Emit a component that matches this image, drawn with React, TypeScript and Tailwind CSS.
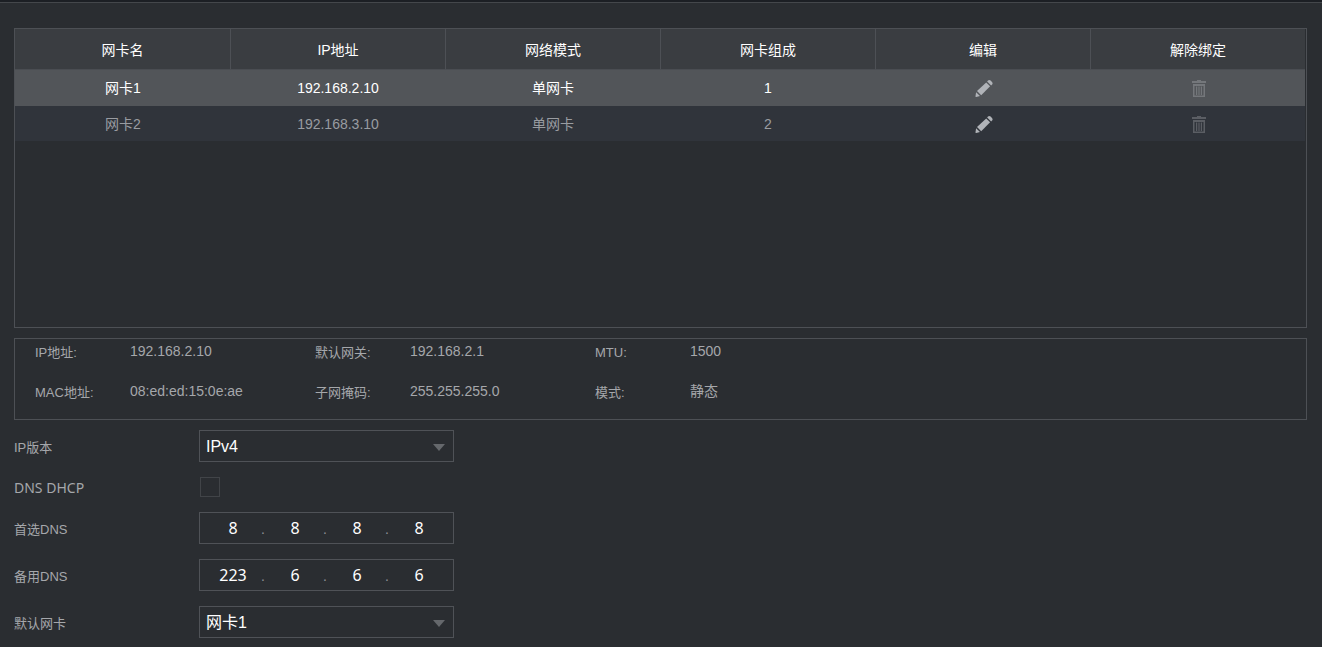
/**
 * TCP/IP network settings page
 *
 * - Network card table
 * - Details of the selected card
 * - DNS and default card form
 */

import { useState } from 'react';
import type { ReactNode } from 'react';
import clsx from 'clsx';

interface NetworkCard {
  name: string;
  ip: string;
  mode: string;
  members: string;
}

const COLUMNS = ['网卡名', 'IP地址', '网络模式', '网卡组成', '编辑', '解除绑定'];

const CARDS: NetworkCard[] = [
  { name: '网卡1', ip: '192.168.2.10', mode: '单网卡', members: '1' },
  { name: '网卡2', ip: '192.168.3.10', mode: '单网卡', members: '2' },
];

const DETAILS = [
  { label: 'IP地址:', value: '192.168.2.10' },
  { label: '默认网关:', value: '192.168.2.1' },
  { label: 'MTU:', value: '1500' },
  { label: 'MAC地址:', value: '08:ed:ed:15:0e:ae' },
  { label: '子网掩码:', value: '255.255.255.0' },
  { label: '模式:', value: '静态' },
];

function PencilIcon() {
  return (
    <svg viewBox="0 0 18 20" className="h-5 w-[18px]" fill="currentColor" aria-hidden="true">
      <path d="M11.2 4.4 15.1 8.3 6.2 17.2 2 13Z" />
      <path d="m12.1 3.4.9-.9a2 2 0 0 1 2.6.1l1.4 1.4a2 2 0 0 1 .1 2.6l-1 .8Z" />
      <path d="M1.1 14.2 5 18.1l-3.8.8a.6.6 0 0 1-.7-.7Z" />
    </svg>
  );
}

function TrashIcon() {
  return (
    <svg viewBox="0 0 14 20" className="h-5 w-[14px]" fill="currentColor" aria-hidden="true">
      <path d="M5 2h4v1h5v2H0V3h5z" />
      <path
        fillRule="evenodd"
        d="M1 6h12v13H1zM2.5 8v9.5h9V8zM4 8.5h1.2V17H4zM6.4 8.5h1.2V17H6.4zM8.8 8.5H10V17H8.8z"
      />
    </svg>
  );
}

interface FieldProps {
  label: string;
  htmlFor: string;
  latin?: boolean;
  children: ReactNode;
}

function Field({ label, htmlFor, latin, children }: FieldProps) {
  return (
    <div className="flex items-center">
      <label
        htmlFor={htmlFor}
        className={clsx(
          'w-[185px] shrink-0 text-[#a5a7ab]',
          latin ? "pt-0.5 font-['Noto_Sans',sans-serif] text-sm leading-4" : 'pt-1 text-[13px] leading-4',
        )}
      >
        {label}
      </label>
      {children}
    </div>
  );
}

function SelectBox({ id, options }: { id: string; options: string[] }) {
  return (
    <div className="relative w-[255px]">
      <select
        id={id}
        className="h-8 w-full appearance-none border border-[#4f5257] bg-transparent px-1.5 pt-0.5 text-base text-white outline-none"
      >
        {options.map((option) => (
          <option key={option} className="bg-[#2a2d31]">
            {option}
          </option>
        ))}
      </select>
      <svg
        viewBox="0 0 12 7"
        className="pointer-events-none absolute top-3.5 right-[9px] h-[7px] w-3 fill-[#65686c]"
        aria-hidden="true"
      >
        <path d="M0 0h12L6 7z" />
      </svg>
    </div>
  );
}

function AddressInput({ id, label, value }: { id: string; label: string; value: string }) {
  return (
    <div className="flex h-8 w-[255px] items-center border border-[#4f5257] pl-[5px]">
      {value.split('.').map((octet, i) => (
        <div key={i} className="flex items-center">
          {i > 0 && <span className="w-1.5 pt-0.5 text-sm text-[#8d9095]">.</span>}
          <input
            id={i === 0 ? id : undefined}
            aria-label={`${label} ${i + 1}`}
            defaultValue={octet}
            maxLength={3}
            className="w-14 bg-transparent text-center font-['Noto_Sans',sans-serif] text-base text-white outline-none"
          />
        </div>
      ))}
    </div>
  );
}

export default function App() {
  const [selected, setSelected] = useState(0);

  return (
    <div className="min-h-screen bg-[#2a2d31] font-['Liberation_Sans','Noto_Sans_CJK_SC',sans-serif]">
      <div className="h-[3px] border-b border-[#44474b] bg-[#1c1f24]" />

      <main className="flex flex-col gap-2.5 pt-[25px] pr-[15px] pl-3.5">
        {/* Network cards */}
        <div className="h-[300px] border border-[#4d5055] pr-px">
          <table className="w-full table-fixed border-separate border-spacing-0 text-center text-sm">
            <thead>
              <tr className="h-[41px] bg-[#3a3d41] text-white">
                {COLUMNS.map((column) => (
                  <th
                    key={column}
                    className="border-b border-l border-b-[#4a4d52] border-l-[#4d5055] p-0 pt-0.5 font-normal first:border-l-0"
                  >
                    {column}
                  </th>
                ))}
              </tr>
            </thead>
            <tbody>
              {CARDS.map((card, i) => (
                <tr
                  key={card.name}
                  onClick={() => setSelected(i)}
                  className={clsx(
                    i === selected ? 'h-9 bg-[#525559] text-white' : 'h-[35px] bg-[#30343b] text-[#999ca1]',
                  )}
                >
                  <td className="p-0 pl-px">{card.name}</td>
                  <td className="p-0 pl-px">{card.ip}</td>
                  <td className="p-0 pl-px">{card.mode}</td>
                  <td className="p-0 pl-px">{card.members}</td>
                  <td className="p-0 pl-0.5">
                    <button type="button" aria-label="编辑" className="mx-auto block text-[#b0b3b8]">
                      <PencilIcon />
                    </button>
                  </td>
                  <td className="p-0 pl-0.5">
                    <button
                      type="button"
                      aria-label="解除绑定"
                      disabled
                      className={clsx('mx-auto block', i === selected ? 'text-[#74777b]' : 'text-[#5b5e64]')}
                    >
                      <TrashIcon />
                    </button>
                  </td>
                </tr>
              ))}
            </tbody>
          </table>
        </div>

        {/* Selected card */}
        <dl className="grid grid-cols-[280px_280px_280px] gap-y-3 border border-[#4d5055] pb-3 pl-5 text-[#a5a7ab]">
          {DETAILS.map(({ label, value }) => (
            <div key={label} className="flex">
              <dt className="w-[95px] text-[13px] leading-7">{label}</dt>
              <dd className="text-sm leading-6">{value}</dd>
            </div>
          ))}
        </dl>

        {/* DNS settings */}
        <form className="flex flex-col gap-[15px]">
          <Field label="IP版本" htmlFor="ip-version">
            <SelectBox id="ip-version" options={['IPv4', 'IPv6']} />
          </Field>
          <Field label="DNS DHCP" htmlFor="dns-dhcp" latin>
            <input
              id="dns-dhcp"
              type="checkbox"
              className="ml-px size-5 appearance-none border border-[#414448] checked:bg-[#65686c]"
            />
          </Field>
          <Field label="首选DNS" htmlFor="dns-primary">
            <AddressInput id="dns-primary" label="首选DNS" value="8.8.8.8" />
          </Field>
          <Field label="备用DNS" htmlFor="dns-secondary">
            <AddressInput id="dns-secondary" label="备用DNS" value="223.6.6.6" />
          </Field>
          <Field label="默认网卡" htmlFor="default-card">
            <SelectBox id="default-card" options={CARDS.map((card) => card.name)} />
          </Field>
        </form>
      </main>
    </div>
  );
}
